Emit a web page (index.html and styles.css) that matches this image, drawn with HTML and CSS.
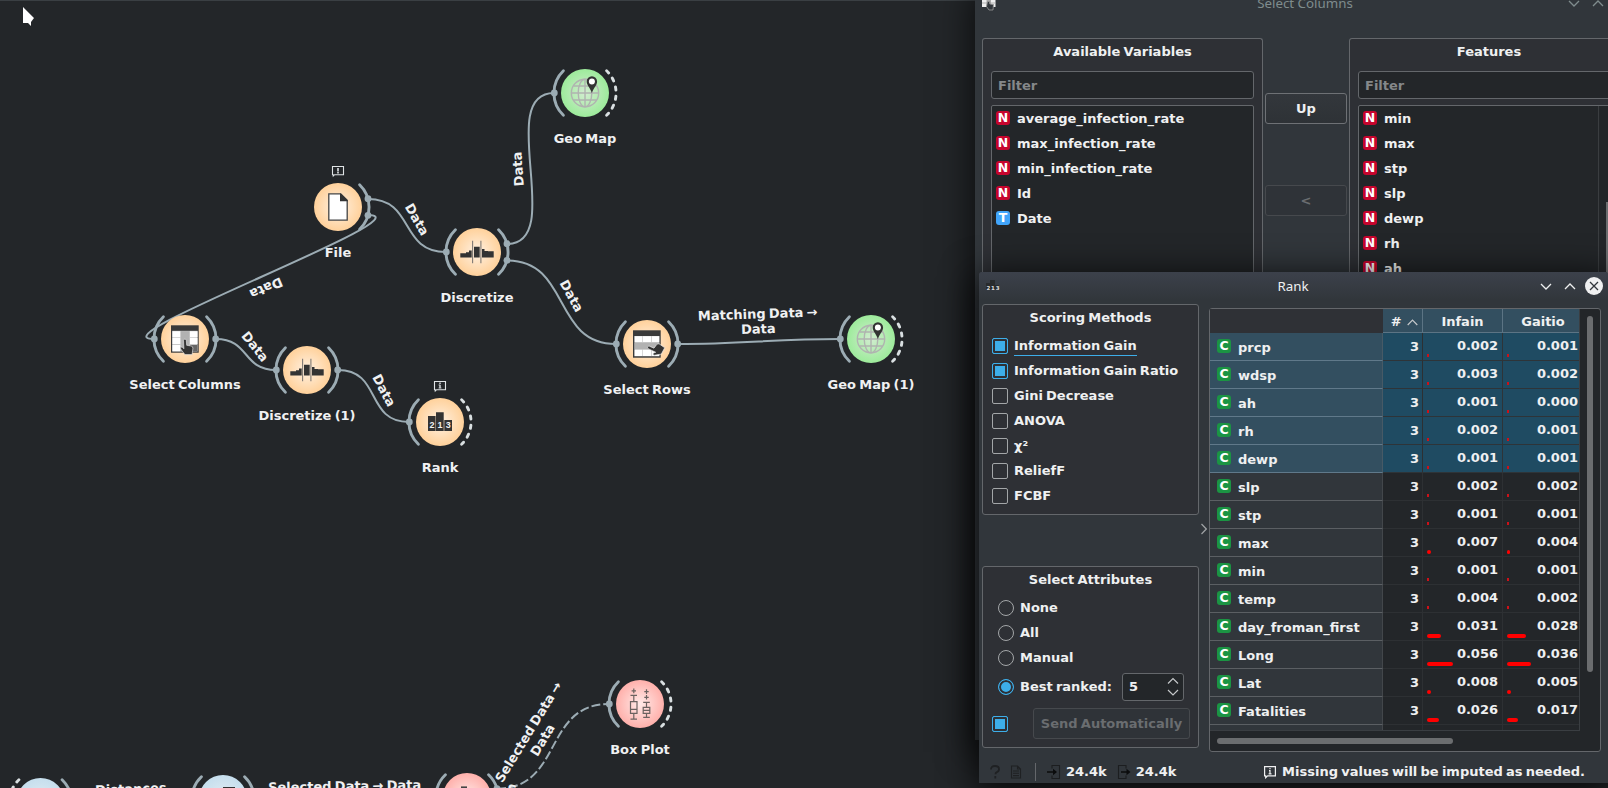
FILE: index.html
```html
<!DOCTYPE html>
<html lang="en">
<head>
<meta charset="utf-8">
<title>Workflow</title>
<link rel="stylesheet" href="styles.css">
</head>
<body>
<div class="desktop">
<svg class="canvas" width="1608" height="788" viewBox="0 0 1608 788">
  <defs>
    <radialGradient id="g-data"><stop offset="0" stop-color="#fff1e2"/><stop offset="1" stop-color="#ffd19b"/></radialGradient>
    <radialGradient id="g-geo"><stop offset="0" stop-color="#d2ecd0"/><stop offset="1" stop-color="#9deb9b"/></radialGradient>
    <radialGradient id="g-vis"><stop offset="0" stop-color="#ffeae8"/><stop offset="1" stop-color="#ffb0ab"/></radialGradient>
    <radialGradient id="g-uns"><stop offset="0" stop-color="#e4edf3"/><stop offset="1" stop-color="#c5deed"/></radialGradient>
    <path id="arc-in" class="arc" d="M-21.6-22.3A31 31 0 0 0-21.6 22.3"/>
    <path id="arc-out" class="arc" d="M21.6-22.3A31 31 0 0 1 21.6 22.3"/>
    <path id="arc-free" class="arc arc-free" d="M21.6-22.3A31 31 0 0 1 21.6 22.3"/>
    <g id="i-disc">
      <path fill="#333" d="M-16.7 5.5V1.2H-11V.2H-8V-1.6H-5.3V5.5ZM-3-5.3H2.7V5.5H-3ZM5-3H7.5V-1H11V-.7H16.7V5.5H5Z"/>
      <path stroke="#807a74" stroke-width="1.1" d="M-4.4-11.3V11.3M3.9-11.3V11.3"/>
    </g>
    <g id="i-globe">
      <g fill="none" stroke="#b0b3b0" stroke-width="1.4"><circle r="13.7"/><ellipse rx="6.8" ry="13.7"/><path d="M0-13.7V13.7M-13.7 0H13.7M-11.5-7H11.5M-11.5 7H11.5"/></g>
      <path fill="#333" d="M6.9.3C5.8-4.5 1.7-7.6 1.7-11.5A5.2 5.2 0 0 1 12.1-11.5C12.1-7.6 8-4.5 6.9.3Z"/><circle cx="6.9" cy="-11.6" r="3" fill="#fff"/>
    </g>
    <g id="i-hand"><path fill="#333" stroke="#eee" stroke-width=".6" d="M-2-7.5C-2-9 .6-9 .8-7.5L1.2-2.5 5.6-1.8Q7.6-1.4 7.4.6L6.6 6.8H-.6L-4.8 1.2C-5.8-.4-3.8-1.3-2.8-.2L-1.6 1Z"/></g>
    <g id="badge"><path fill="none" stroke="#dfe3e5" stroke-width="1.1" d="M-5.5-40.5H5.5V-32.3H-3.4L-4.7-31V-32.3H-5.5Z"/></g>
  </defs>

  <rect width="1608" height="1" fill="#3a3f43"/>
  <path fill="#fff" d="M23 7V23H28L31 26V22L34 18Z"/>

  <g class="links">
    <path d="M368 199C415 199 399 252 446 252"/>
    <path d="M368 215C430 215 92 339 154 339"/>
    <path d="M507 244C567 244 494 93 554 93"/>
    <path d="M507 260.5C571 260.5 552 344 616 344"/>
    <path d="M216 339C250 339 242 370 276 370"/>
    <path d="M338 370C382 370 365 422 409 422"/>
    <path d="M678 344C744 344 774 339 840 339"/>
    <path class="disabled" d="M497 788.7C563 788.7 543 704 609 704"/>
  </g>

  <g class="label">
    <text transform="translate(417 219.5) rotate(60)" y="4.5">Data</text>
    <text transform="translate(518 169) rotate(-94)" y="4.5">Data</text>
    <text transform="translate(571.5 296) rotate(61)" y="4.5">Data</text>
    <text transform="translate(266 288) rotate(157)" y="4.5">Data</text>
    <text transform="translate(255 346.5) rotate(51)" y="4.5">Data</text>
    <text transform="translate(384 390.5) rotate(62)" y="4.500">Data</text>
    <text transform="translate(757.7 314) rotate(-2)" y="4.5">Matching Data →</text>
    <text transform="translate(758.3 329) rotate(-2)" y="4.5">Data</text>
    <text transform="translate(528.5 732) rotate(-58.500)" y="4.5">Selected Data →</text>
    <text transform="translate(542.5 740) rotate(-59)" y="4.5">Data</text>
    <text transform="translate(131 793.5) rotate(-2)">Distances</text>
    <text transform="translate(344.7 790.7) rotate(-1)">Selected Data → Data</text>
    <text class="start" transform="translate(506 793) rotate(14)">Selected Data</text>
  </g>

  <g transform="translate(585 93)"><use href="#arc-in"/><use href="#arc-free"/><circle class="dot" cx="-30.7" r="3.4"/><circle r="24" fill="url(#g-geo)"/><use href="#i-globe"/><text class="name" y="50">Geo Map</text></g>

  <g transform="translate(338 207)"><use href="#arc-out"/><circle class="dot" cx="30" cy="-8.3" r="3.4"/><circle class="dot" cx="30" cy="8.3" r="3.4"/><circle r="24" fill="url(#g-data)"/>
    <path fill="#fff" stroke="#444" stroke-width="1.3" d="M-9.2-13.2H2.6L9.2-6.5V13.2H-9.2Z"/><path fill="#333" d="M2-13.6H3L9.7-7V-5.8H2Z"/>
    <use href="#badge"/><path stroke="#dfe3e5" stroke-width="1.6" d="M0-39V-35.6M0-34.9V-33.5"/><text class="name" y="50">File</text></g>

  <g transform="translate(477 252)"><use href="#arc-in"/><use href="#arc-out"/><circle class="dot" cx="-30.7" r="3.4"/><circle class="dot" cx="30" cy="-8.3" r="3.4"/><circle class="dot" cx="30" cy="8.3" r="3.4"/><circle r="24" fill="url(#g-data)"/><use href="#i-disc"/><text class="name" y="50">Discretize</text></g>

  <g transform="translate(185 339)"><use href="#arc-in"/><use href="#arc-out"/><circle class="dot" cx="-30.7" r="3.4"/><circle class="dot" cx="30.7" r="3.4"/><circle r="24" fill="url(#g-data)"/>
    <rect x="-14" y="-13.7" width="27.7" height="27.4" fill="#3a3a3a"/><rect x="-12.8" y="-8.2" width="25.4" height="20.7" fill="#c9c9c9"/><path fill="#fff" d="M-12.5-7.8H-4.7V-1.8H-12.5ZM-12.5-1H-4.7V5H-12.5ZM-12.5 6H-4.7V12.2H-12.5ZM5-7.8H12.5V-1.8H5ZM5-1H12.5V5H5Z"/><path fill="#b2b2b2" d="M-4.2-7.8H4.3V12.2H-4.2Z"/><path fill="#666" d="M5 6H12.3V12.2H5Z"/><use href="#i-hand" transform="translate(.5 8.8)"/>
    <text class="name" y="50">Select Columns</text></g>

  <g transform="translate(307 370)"><use href="#arc-in"/><use href="#arc-out"/><circle class="dot" cx="-30.7" r="3.4"/><circle class="dot" cx="30.7" r="3.4"/><circle r="24" fill="url(#g-data)"/><use href="#i-disc"/><text class="name" y="50">Discretize (1)</text></g>

  <g transform="translate(440 422)"><use href="#arc-in"/><use href="#arc-free"/><circle class="dot" cx="-30.7" r="3.4"/><circle r="24" fill="url(#g-data)"/>
    <path fill="#333" d="M-12-6H-4.4V9H-12ZM-4-9.7H3.7V9H-4ZM4.3-2H12V9H4.3Z"/><g class="digits"><text x="-8.1" y="6.4">2</text><text x="-.1" y="6.4">1</text><text x="8.2" y="6.4">3</text></g>
    <use href="#badge"/><path stroke="#dfe3e5" stroke-width="1.4" d="M0-39.400V-38M0-37.200V-33.8"/><path stroke="#dfe3e5" stroke-width=".7" d="M-1.500-37H0M-1.5-34H1.5"/><text class="name" y="50">Rank</text></g>

  <g transform="translate(647 344)"><use href="#arc-in"/><use href="#arc-out"/><circle class="dot" cx="-30.7" r="3.4"/><circle class="dot" cx="30.7" r="3.4"/><circle r="24" fill="url(#g-data)"/>
    <rect x="-14" y="-13.7" width="27.7" height="27.4" fill="#3a3a3a"/><rect x="-12.600" y="-8" width="25" height="20.300" fill="#c9c9c9"/><path fill="#fff" d="M-12.3-7.8H-5V-2H-12.3ZM-4.3-7.8H4V-2H-4.3ZM4.8-7.8H12.2V-2H4.8ZM-12.3 5.8H-5V12H-12.3ZM-4.3 5.8H4V12H-4.3ZM4.8 5.8H12.2V12H4.8Z"/><path fill="#b2b2b2" d="M-12.3-1.2H12.2V5.2H-12.3Z"/><use href="#i-hand" transform="translate(8.6 6.4) rotate(-62)"/>
    <text class="name" y="50">Select Rows</text></g>

  <g transform="translate(871 339)"><use href="#arc-in"/><use href="#arc-free"/><circle class="dot" cx="-30.7" r="3.4"/><circle r="24" fill="url(#g-geo)"/><use href="#i-globe"/><text class="name" y="50">Geo Map (1)</text></g>

  <g transform="translate(640 704)"><use href="#arc-in"/><use href="#arc-free"/><circle class="dot" cx="-30.7" r="3.4"/><circle r="24" fill="url(#g-vis)"/>
    <path fill="none" stroke="#6b6260" stroke-width="1.2" d="M-6.2-15.5V-10.8M-8.4-13.1H-4M-9.5-8.7H-3M-6.2-8.7V-2.3M-9.5-2.3H-3V9.3H-9.5ZM-9.5 5.4H-3M-6.2 9.3V15.2M-9.5 15.2H-3M6.5-14.7V-10.1M4.3-12.4H8.7M6.5-9V-4.4M4.3-6.7H8.7M3.2-1.6H9.8M6.5-1.6V3.4M3.2 3.4H9.8V9.3H3.2ZM3.2 6.4H9.8M6.5 9.3V13.4M3.2 13.4H9.8"/>
    <text class="name" y="50">Box Plot</text></g>

  <g transform="translate(40.5 802)"><use href="#arc-free" transform="scale(-1 1)"/><use href="#arc-out"/><circle r="24" fill="url(#g-uns)"/></g>
  <g transform="translate(223 799)"><use href="#arc-in"/><use href="#arc-out"/><circle r="24" fill="url(#g-uns)"/><rect x="0" y="-12" width="12" height="6" fill="#333"/></g>
  <g transform="translate(467 797)"><use href="#arc-in"/><use href="#arc-out"/><circle class="dot" cx="30" cy="-8.3" r="3.4"/><circle r="24" fill="url(#g-vis)"/><rect x="-6" y="-10.6" width="6" height="6" fill="#444"/></g>
</svg>

<section class="window select-columns">
  <header class="titlebar inactive">
    <svg class="app-icon" width="16" height="16" viewBox="0 0 16 16"><path fill="#eee" d="M1 0H14.500V12H1Z"/><path fill="#aaa" d="M5.500 0H10V12H5.500Z"/><path stroke="#999" stroke-width=".7" d="M1 4H14.500M1 8H14.500"/><path fill="#31363b" stroke="#999" stroke-width=".8" d="M6.500 6.500L8.500 6.500 8.800 9 12.500 9.500 12 15H8L5.500 11.500Z"/></svg>
    <span class="caption">Select Columns</span>
    <svg class="win-buttons" width="60" height="20" viewBox="0 0 60 20"><path d="M4 8L9 13 14 8M28 13L33 8 38 13"/></svg>
  </header>
  <div class="columns">
    <div class="group available">
      <h2>Available Variables</h2>
      <div class="filter">Filter</div>
      <ul class="vars">
        <li><i class="tag num">N</i>average_infection_rate</li>
        <li><i class="tag num">N</i>max_infection_rate</li>
        <li><i class="tag num">N</i>min_infection_rate</li>
        <li><i class="tag num">N</i>Id</li>
        <li><i class="tag txt">T</i>Date</li>
      </ul>
    </div>
    <div class="movers"><div class="button">Up</div><div class="button off">&lt;</div></div>
    <div class="group features">
      <h2>Features</h2>
      <div class="filter">Filter</div>
      <ul class="vars scrolling">
        <li><i class="tag num">N</i>min</li>
        <li><i class="tag num">N</i>max</li>
        <li><i class="tag num">N</i>stp</li>
        <li><i class="tag num">N</i>slp</li>
        <li><i class="tag num">N</i>dewp</li>
        <li><i class="tag num">N</i>rh</li>
        <li><i class="tag num">N</i>ah</li>
      </ul>
    </div>
  </div>
</section>

<section class="window rank">
  <header class="titlebar">
    <svg class="app-icon" width="16" height="16" viewBox="0 0 16 16"><path fill="#292b2d" d="M1 5H5V2H10V7H14V12H1Z"/><g class="mini"><text x="3.300" y="11.500">2</text><text x="8" y="11.500">1</text><text x="12.700" y="11.500">3</text></g></svg>
    <span class="caption">Rank</span>
    <svg class="win-buttons" width="72" height="20" viewBox="0 0 72 20"><path d="M5 8L10 13 15 8M29 13L34 8 39 13"/><circle cx="58" cy="10" r="9"/><path class="x" d="M54 6L62 14M62 6L54 14"/></svg>
  </header>
  <div class="body">
    <aside class="controls">
      <div class="group scoring">
        <h2>Scoring Methods</h2>
        <label><i class="check on"></i><span class="focus">Information Gain</span></label>
        <label><i class="check on"></i>Information Gain Ratio</label>
        <label><i class="check"></i>Gini Decrease</label>
        <label><i class="check"></i>ANOVA</label>
        <label><i class="check"></i>χ²</label>
        <label><i class="check"></i>ReliefF</label>
        <label><i class="check"></i>FCBF</label>
      </div>
      <div class="group attributes">
        <h2>Select Attributes</h2>
        <label><i class="radio"></i>None</label>
        <label><i class="radio"></i>All</label>
        <label><i class="radio"></i>Manual</label>
        <label class="best"><i class="radio on"></i>Best ranked:<span class="spin">5<svg width="12" height="20" viewBox="0 0 12 20"><path d="M1 6.500L6 1.500 11 6.500M1 13L6 18 11 13"/></svg></span></label>
        <div class="send"><i class="check on"></i><div class="button off">Send Automatically</div></div>
      </div>
    </aside>
    <div class="splitter"><svg width="6" height="12" viewBox="0 0 6 12"><path d="M.5 1L5.300 6 .5 11"/></svg></div>
    <div class="table-frame">
      <div class="grid-view">
        <div class="row head"><span class="vh"></span><span class="c0"># <svg width="11" height="7" viewBox="0 0 11 7"><path d="M.7 6L5.500 1 10.300 6"/></svg></span><span class="c1">Infain</span><span class="c2">Gaitio</span></div>
        <div class="row sel"><span class="vh"><i class="tag cat">C</i>prcp</span><span class="c0">3</span><span class="c1">0.002<b style="width:2px"></b></span><span class="c2">0.001<b style="width:2px"></b></span></div>
        <div class="row sel"><span class="vh"><i class="tag cat">C</i>wdsp</span><span class="c0">3</span><span class="c1">0.003<b style="width:2px"></b></span><span class="c2">0.002<b style="width:2px"></b></span></div>
        <div class="row sel"><span class="vh"><i class="tag cat">C</i>ah</span><span class="c0">3</span><span class="c1">0.001<b style="width:2px"></b></span><span class="c2">0.000<b style="width:2px"></b></span></div>
        <div class="row sel"><span class="vh"><i class="tag cat">C</i>rh</span><span class="c0">3</span><span class="c1">0.002<b style="width:2px"></b></span><span class="c2">0.001<b style="width:2px"></b></span></div>
        <div class="row sel"><span class="vh"><i class="tag cat">C</i>dewp</span><span class="c0">3</span><span class="c1">0.001<b style="width:2px"></b></span><span class="c2">0.001<b style="width:2px"></b></span></div>
        <div class="row"><span class="vh"><i class="tag cat">C</i>slp</span><span class="c0">3</span><span class="c1">0.002<b style="width:2px"></b></span><span class="c2">0.002<b style="width:2px"></b></span></div>
        <div class="row"><span class="vh"><i class="tag cat">C</i>stp</span><span class="c0">3</span><span class="c1">0.001<b style="width:2px"></b></span><span class="c2">0.001<b style="width:2px"></b></span></div>
        <div class="row"><span class="vh"><i class="tag cat">C</i>max</span><span class="c0">3</span><span class="c1">0.007<b style="width:4px"></b></span><span class="c2">0.004<b style="width:3px"></b></span></div>
        <div class="row"><span class="vh"><i class="tag cat">C</i>min</span><span class="c0">3</span><span class="c1">0.001<b style="width:2px"></b></span><span class="c2">0.001<b style="width:2px"></b></span></div>
        <div class="row"><span class="vh"><i class="tag cat">C</i>temp</span><span class="c0">3</span><span class="c1">0.004<b style="width:2px"></b></span><span class="c2">0.002<b style="width:2px"></b></span></div>
        <div class="row"><span class="vh"><i class="tag cat">C</i>day_froman_first</span><span class="c0">3</span><span class="c1">0.031<b style="width:14px"></b></span><span class="c2">0.028<b style="width:19px"></b></span></div>
        <div class="row"><span class="vh"><i class="tag cat">C</i>Long</span><span class="c0">3</span><span class="c1">0.056<b style="width:26px"></b></span><span class="c2">0.036<b style="width:24px"></b></span></div>
        <div class="row"><span class="vh"><i class="tag cat">C</i>Lat</span><span class="c0">3</span><span class="c1">0.008<b style="width:4px"></b></span><span class="c2">0.005<b style="width:4px"></b></span></div>
        <div class="row"><span class="vh"><i class="tag cat">C</i>Fatalities</span><span class="c0">3</span><span class="c1">0.026<b style="width:12px"></b></span><span class="c2">0.017<b style="width:11px"></b></span></div>
        <div class="row"><span class="vh"></span><span class="c0"></span><span class="c1"></span><span class="c2"></span></div>
      </div>
      <div class="vscroll"><div></div></div>
      <div class="hscroll"><div></div></div>
    </div>
  </div>
  <footer class="status">
    <svg width="14" height="16" viewBox="0 0 14 16"><path class="ghost" d="M3 5.500Q3 2 7 2T11 5.300Q11 7.500 8.500 8.300 7.500 8.700 7.500 10.300M7.300 12V14.500"/></svg>
    <svg class="report" width="12" height="16" viewBox="0 0 12 16"><path class="ghost thin" d="M1.500 2H7.500L10.500 5V14H1.500ZM7.500 2V5H10.500M3 7H9M3 9.300H9M3 11.600H9"/></svg>
    <i class="bar"></i>
    <svg width="14" height="16" viewBox="0 0 14 16"><path class="io" d="M5 4.500V1.500H12.500V14.500H5V11.500"/><path fill="#0b0c0d" d="M0 7.200H6V4.800L10 8 6 11.200V8.800H0Z"/></svg>
    <span class="count">24.4k</span>
    <svg width="14" height="16" viewBox="0 0 14 16"><path class="io" d="M9 4.500V1.500H1.500V14.500H9V11.500"/><path fill="#0b0c0d" d="M4 7.200H9.500V4.800L13.500 8 9.500 11.200V8.800H4Z"/></svg>
    <span class="count">24.4k</span>
    <span class="message"><svg width="12" height="13" viewBox="0 0 12 13"><path class="bubble" d="M.6.6H11.400V9.800H3.600L1.700 11.700V9.800H.6Z"/><path class="bubble" d="M6 2V3.300M5 4.600H6V7.800M4.600 7.800H7.500"/></svg>Missing values will be imputed as needed.</span>
  </footer>
</section>
</div>
</body>
</html>
```
FILE: styles.css
```css
* { box-sizing: border-box; }
body {
  margin: 0;
  background: #232629;
  color: #eff0f1;
  font: bold 13px/16px "DejaVu Sans", sans-serif;
  word-spacing: -1.3px;
}
.desktop { position: relative; width: 1608px; height: 788px; overflow: hidden; }
.canvas { display: block; }
.canvas text { fill: #f0f1f2; text-anchor: middle; }
.canvas text.start { text-anchor: start; }
.canvas .digits text { font-size: 9px; font-family: "Liberation Sans", sans-serif; }
.arc { fill: none; stroke: #9cacb4; stroke-width: 2.9; stroke-linecap: round; }
.arc-free { stroke: #d9dfe1; stroke-dasharray: 3.2 6.12; }
.dot { fill: #9cacb4; }
.links path { fill: none; stroke: #9cacb4; stroke-width: 2; }
.links .disabled { stroke-dasharray: 9 3; }

.window {
  position: absolute;
  background: #31363b;
  overflow: hidden;
  display: flex;
  flex-direction: column;
}
.select-columns { left: 975px; top: -14px; width: 660px; height: 754px; box-shadow: 0 8px 32px 4px rgba(0,0,0,.65); }
.rank { left: 979px; top: 272px; width: 629px; height: 511px; box-shadow: 0 6px 34px 4px rgba(0,0,0,.75); border-radius: 3px 3px 0 0; }

.titlebar {
  display: grid;
  grid-template-columns: 75px 1fr 75px;
  align-items: center;
  height: 28px;
  flex: none;
  padding: 0 0 0 6px;
  background: linear-gradient(#3c414b, #31363b);
  font: 13.33px/18px "Noto Sans", sans-serif;
  word-spacing: 0;
}
.rank .caption { padding-right: 7px; }
.inactive { background: none; color: #7f8c8d; padding: 5px 10px 0 6px; }
.inactive .caption { padding-left: 4px; }
.caption { text-align: center; }
.win-buttons { justify-self: end; fill: none; stroke: #eff0f1; stroke-width: 1.3; }
.win-buttons circle { fill: #eff0f1; stroke: none; }
.win-buttons .x { stroke: #31363b; }
.inactive .win-buttons { stroke: #7f8c8d; }
.mini text { font: bold 5.5px "DejaVu Sans", sans-serif; fill: #ddd; text-anchor: middle; }

.group { background: #2e3035; border: 1px solid #64676b; border-radius: 3px; }
h2 { margin: 0; font-size: 13px; line-height: 16px; text-align: center; }
.columns { display: grid; grid-template-columns: 281px 86px 280px; padding: 24px 7px 0; flex: 1; }
.columns .group { padding: 5px 8px 0; display: flex; flex-direction: column; border-bottom: 0; }
.filter { margin-top: 11px; height: 28px; padding: 6px 6px; flex: none; color: #85888a; background: #232629; border: 1px solid #64676b; border-radius: 3px; }
.vars { list-style: none; margin: 6px 0 0; padding: 0 0 0 4px; flex: 1; background: #232629; border: 1px solid #64676b; border-radius: 2px; }
.vars li { height: 25px; display: flex; align-items: center; gap: 7px; padding-top: 1px; }
.scrolling { background: linear-gradient(#3a3d40, #3a3d40) 239px 0 / 1px 100% no-repeat, linear-gradient(#6b6d6f, #6b6d6f) 247px 96px / 6px 100% no-repeat, #232629; }
.tag { width: 14px; height: 14px; border-radius: 3px; font-style: normal; font-size: 12.5px; line-height: 13px; text-align: center; color: #fff; flex: none; position: relative; top: -1px; }
.num { background: #c7052d; }
.txt { background: #41a5fb; }
.cat { background: #1b9443; }
.movers { padding: 55px 2px 0; display: flex; flex-direction: column; gap: 61px; }
.button { height: 31px; border: 1px solid #6e7175; border-radius: 3px; text-align: center; line-height: 29px; background: linear-gradient(#33373c, #2e3236); }
.off { border-color: #46494d; color: #6a6d70; background: #2f3338; }

.body { display: flex; height: 451px; padding: 4px 7px 0 3px; flex: none; }
.controls { width: 217px; display: flex; flex-direction: column; gap: 51px; }
.controls .group { padding: 5px 9px 0; }
.scoring { height: 211px; }
.attributes { height: 182px; }
.scoring h2, .attributes h2 { margin-bottom: 7px; }
.controls label { display: flex; align-items: center; height: 25px; gap: 6px; }
.attributes label { padding-left: 6px; }
.check, .radio { width: 16px; height: 16px; flex: none; border: 1px solid #a3a6a8; border-radius: 2px; }
.radio { border-radius: 50%; }
.on { border-color: #3daee9; background: #3daee9; box-shadow: inset 0 0 0 2px #2e3035; }
.focus { border-bottom: 1px solid #3daee9; padding: 1px 0; margin-top: 2px; }
.attributes .best { height: 33px; }
.spin { margin-left: 4px; width: 62px; height: 28px; display: flex; align-items: center; justify-content: space-between; padding: 0 4px 0 6px; background: #232629; border: 1px solid #64676b; border-radius: 3px; }
.spin svg, .splitter svg, .c0 svg { fill: none; stroke: #c5c8ca; stroke-width: 1.2; }
.send { display: flex; align-items: center; justify-content: space-between; margin-right: -1px; margin-top: 5px; }
.send .button { width: 157px; }
.splitter { width: 10px; padding: 219px 0 0 2px; }
.splitter svg { stroke: #a0a3a5; }

.table-frame {
  width: 392px; height: 444px; margin-top: 4px;
  display: grid; grid-template: 422px 1fr / 370px 1fr;
  background: #232629; border: 1px solid #64676b; border-radius: 3px;
}
.grid-view { overflow: hidden; border-bottom: 1px solid #3a3e42; border-right: 1px solid #3a3e42; }
.row { display: grid; grid-template-columns: 173px 40px 80px 76px; height: 28px; }
.row span { position: relative; border-bottom: 1px solid #2d3033; border-right: 1px solid #2d3033; }
.row span.vh { display: flex; align-items: center; gap: 7px; padding: 3px 0 0 7px; background: #31363b; border-color: #5b5f63; border-right-color: #43474b; }
.vh .tag { top: -2px; }
.row .c0 { text-align: right; padding: 6px 3px 0 0; border-right-color: #2d3033; }
.row .c1, .row .c2 { text-align: right; padding: 5px 4px 0 0; }
.row .c2 { padding-right: 1px; border-right: 0; }
.row b { position: absolute; left: 4px; top: 20.5px; height: 4px; border-radius: 2px; background: #f00; }
.row b[style="width:2px"] { width: 2px; height: 3px; border-radius: 0; background: #cc1119; }
.sel span { background: #1f4b62; border-color: #2e3438; }
.row.sel span.vh { background: #334f60; border-color: #60798a; border-right-color: #475a66; }
.row.head { height: 24px; }
.row.head span { background: #334f60; border-color: #5c7484; text-align: center; padding: 5px 0 0; }
.row.head span.vh { background: #2f3136; border-color: #2f3136; }
.row.head .c0 { padding-left: 4px; word-spacing: 1px; }
.row.head .c2 { padding-left: 4px; }
.vscroll { padding: 7px 0 0 7px; }
.vscroll div { width: 6px; height: 356px; border-radius: 3px; background: #6b6d6f; }
.hscroll { grid-column: 1 / 3; padding: 7px 0 0 7px; }
.hscroll div { width: 236px; height: 6px; border-radius: 3px; background: #6b6d6f; }

.status { display: flex; align-items: center; height: 32px; padding: 10px 23px 0 9px; }
.status > svg, .status .bar, .message svg { flex: none; }
.report { margin-left: 8px; }
.ghost { fill: none; stroke: #1f2123; stroke-width: 1.8; }
.thin { stroke-width: 1.1; }
.io { fill: none; stroke: #1c1e20; stroke-width: 1.1; }
.bar { width: 1px; height: 18px; margin: 0 11px 0 13px; background: #64676b; }
.count { margin: 0 10px 0 5px; }
.message { display: flex; align-items: center; gap: 6px; margin-left: auto; white-space: nowrap; }
.bubble { fill: none; stroke: #eff0f1; stroke-width: 1.2; }
```
